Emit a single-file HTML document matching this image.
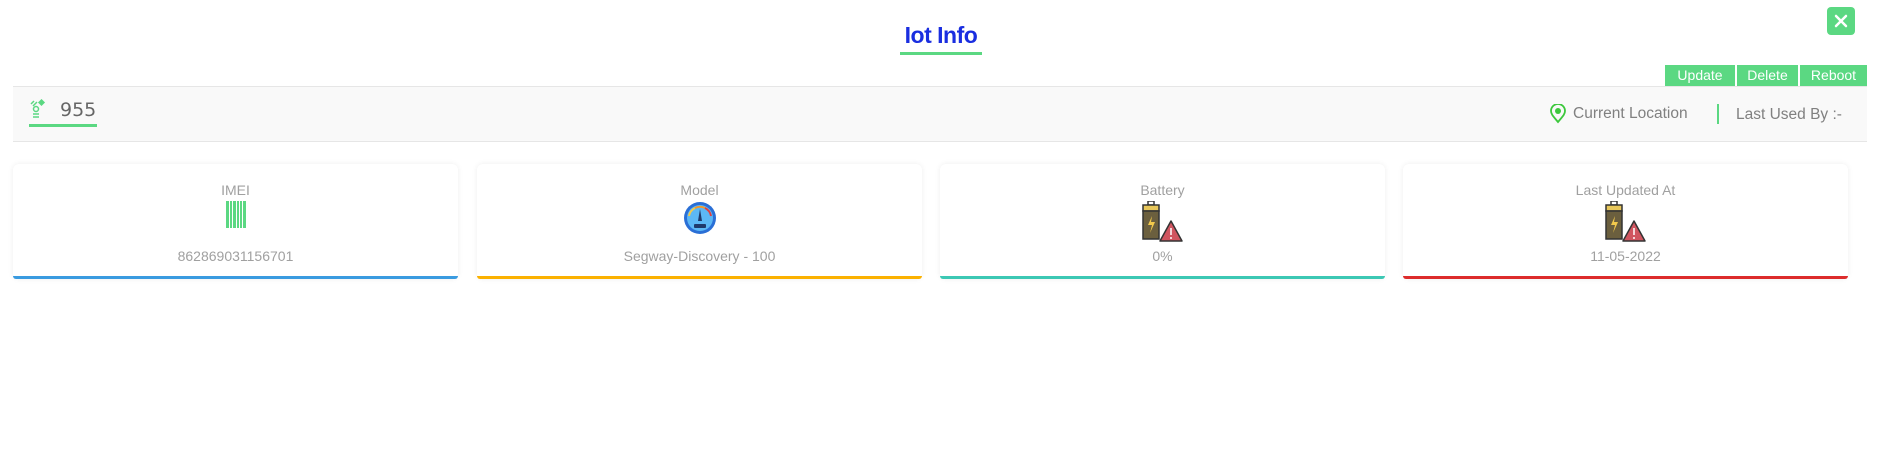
<!DOCTYPE html>
<html><head><meta charset="utf-8"><style>
*{margin:0;padding:0;box-sizing:border-box}
body{width:1880px;height:469px;background:#fff;font-family:"Liberation Sans",sans-serif;position:relative;overflow:hidden}
.abs{position:absolute}
.title{left:900px;top:22px;width:82px;text-align:center;color:#1a2ee0;font-weight:bold;font-size:23px;letter-spacing:-0.5px}
.tline{left:900px;top:52px;width:82px;height:3px;background:#5bd882}
.close{left:1827px;top:7px;width:28px;height:28px;background:#5bd882;border-radius:4px}
.btn{top:65px;height:21px;background:#5bd882;color:#fff;font-size:14px;line-height:21px;text-align:center}
.bar{left:13px;top:86px;width:1854px;height:56px;background:#f9f9f9;border-top:1px solid #e6e6e6;border-bottom:1px solid #e6e6e6}
.card{top:164px;width:445px;height:115px;background:#fff;border-radius:6px;box-shadow:0 0 6px rgba(0,0,0,.07);text-align:center;color:#a0a0a0;font-size:14px}
.card .t{position:absolute;top:18px;left:0;right:0}
.card .v{position:absolute;top:84px;left:0;right:0}
.card .b{position:absolute;left:0;right:0;bottom:0;height:3px;border-radius:0 0 6px 6px}
.card svg{position:absolute;top:37px;left:50%;transform:translateX(-50%)}
</style></head><body>
<div class="abs title">Iot Info</div>
<div class="abs tline"></div>
<div class="abs close"><svg width="28" height="28"><path d="M9 9L19 19M19 9L9 19" stroke="#fff" stroke-width="2.5" stroke-linecap="round"/></svg></div>
<div class="abs btn" style="left:1665px;width:70px">Update</div>
<div class="abs btn" style="left:1737px;width:61px">Delete</div>
<div class="abs btn" style="left:1800px;width:67px">Reboot</div>
<div class="abs bar"></div>
<svg class="abs" style="left:30px;top:99px" width="16" height="20"><path d="M1 5L4 2M3 7L7 3" stroke="#5bd882" stroke-width="1.5"/><rect x="9" y="1" width="5" height="5" fill="#5bd882" transform="rotate(45 11.5 3.5)"/><circle cx="6" cy="10" r="2.5" fill="none" stroke="#5bd882" stroke-width="1.5"/><path d="M3 15H9M3 18H9" stroke="#5bd882" stroke-width="1.5"/></svg>
<div class="abs" style="left:60px;top:99px;font-family:'DejaVu Sans',sans-serif;font-size:19px;color:#666">955</div>
<div class="abs" style="left:29px;top:124px;width:68px;height:3px;background:#5bd882"></div>
<svg class="abs" style="left:1550px;top:104px" width="16" height="20"><path d="M8 18C3 12 1 10 1 7A7 7 0 0 1 15 7C15 10 13 12 8 18Z" fill="none" stroke="#3cc83c" stroke-width="1.8"/><circle cx="8" cy="7" r="3" fill="#3cc83c"/></svg>
<div class="abs" style="left:1573px;top:105px;font-size:15.5px;color:#808080">Current Location</div>
<div class="abs" style="left:1717px;top:104px;width:2px;height:20px;background:#5bd882"></div>
<div class="abs" style="left:1736px;top:106px;font-size:15.5px;color:#808080">Last Used By :-</div>

<div class="abs card" style="left:13px"><div class="t">IMEI</div>
<svg width="20" height="27"><g fill="#5bd882"><rect x="0" y="0" width="3" height="27"/><rect x="4" y="0" width="2" height="27"/><rect x="7" y="0" width="3" height="27"/><rect x="11" y="0" width="2" height="27"/><rect x="14" y="0" width="2" height="27"/><rect x="17" y="0" width="3" height="27"/></g></svg>
<div class="v">862869031156701</div><div class="b" style="background:#3a9be0"></div></div>

<div class="abs card" style="left:477px"><div class="t">Model</div>
<svg width="34" height="34"><circle cx="17" cy="17" r="16" fill="#2a6fd6"/><circle cx="17" cy="17" r="13" fill="#5cb8f5"/><path d="M6 15A11 11 0 0 1 12 7" stroke="#f2c94c" stroke-width="2" fill="none"/><path d="M12 7A11 11 0 0 1 22 7" stroke="#f29b30" stroke-width="2" fill="none"/><path d="M22 7A11 11 0 0 1 28 15" stroke="#e04040" stroke-width="2" fill="none"/><path d="M17 8L15 20H19Z" fill="#1f3a6b"/><rect x="11" y="23" width="12" height="4" rx="1" fill="#1f3a6b"/></svg>
<div class="v">Segway-Discovery - 100</div><div class="b" style="background:#fbb100"></div></div>

<div class="abs card" style="left:940px"><div class="t">Battery</div>
<svg width="42" height="42"><rect x="6" y="0" width="6" height="4" fill="none" stroke="#333" stroke-width="1.5"/><rect x="1" y="4" width="16" height="6" fill="#e8c75a" stroke="#333" stroke-width="1.5"/><rect x="1" y="10" width="16" height="28" fill="#6b5f3e" stroke="#333" stroke-width="1.5"/><path d="M10 15L6 24H10L8 32L13 21H9Z" fill="#f2c94c"/><path d="M29 20L40 40H18Z" fill="#d05560" stroke="#333" stroke-width="1.5" stroke-linejoin="round"/><path d="M29 27V34M29 36V38" stroke="#fff" stroke-width="1.5"/></svg>
<div class="v">0%</div><div class="b" style="background:#3cc8b4"></div></div>

<div class="abs card" style="left:1403px"><div class="t">Last Updated At</div>
<svg width="42" height="42"><rect x="6" y="0" width="6" height="4" fill="none" stroke="#333" stroke-width="1.5"/><rect x="1" y="4" width="16" height="6" fill="#e8c75a" stroke="#333" stroke-width="1.5"/><rect x="1" y="10" width="16" height="28" fill="#6b5f3e" stroke="#333" stroke-width="1.5"/><path d="M10 15L6 24H10L8 32L13 21H9Z" fill="#f2c94c"/><path d="M29 20L40 40H18Z" fill="#d05560" stroke="#333" stroke-width="1.5" stroke-linejoin="round"/><path d="M29 27V34M29 36V38" stroke="#fff" stroke-width="1.5"/></svg>
<div class="v">11-05-2022</div><div class="b" style="background:#dd2c2c"></div></div>
</body></html>
